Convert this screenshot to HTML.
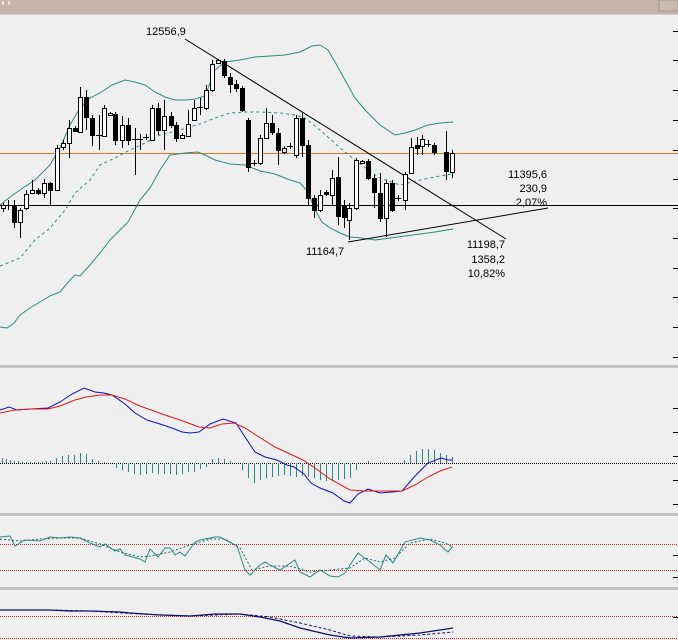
<!DOCTYPE html>
<html><head><meta charset="utf-8"><style>
html,body{margin:0;padding:0;background:#efefef;width:678px;height:640px;overflow:hidden}
svg{display:block;font-family:"Liberation Sans",sans-serif}
</style></head><body>
<svg width="678" height="640" viewBox="0 0 678 640" xmlns="http://www.w3.org/2000/svg">
<rect x="0" y="0" width="678" height="640" fill="#efefef"/>
<rect x="0" y="0" width="678" height="14" fill="#c6b4aa"/>
<rect x="0" y="14" width="678" height="1" fill="#dccfc6"/>
<rect x="659" y="0" width="19" height="11" fill="#cbbab0" stroke="#a89890" stroke-width="1"/>
<rect x="2" y="1" width="2" height="4" fill="#e8e0dc"/><rect x="8" y="1" width="2" height="4" fill="#e8e0dc"/>
<!-- separators -->
<rect x="0" y="365" width="678" height="3" fill="#c0c0c0"/>
<rect x="0" y="513" width="678" height="3" fill="#c0c0c0"/>
<rect x="0" y="587" width="678" height="3" fill="#c0c0c0"/>
<!-- ticks -->
<g stroke="#000" stroke-width="1">
<line x1="673" y1="31.5" x2="678" y2="31.5"/><line x1="673" y1="60.5" x2="678" y2="60.5"/><line x1="673" y1="90.5" x2="678" y2="90.5"/><line x1="673" y1="120.5" x2="678" y2="120.5"/><line x1="673" y1="150.5" x2="678" y2="150.5"/><line x1="673" y1="179.5" x2="678" y2="179.5"/><line x1="673" y1="208.5" x2="678" y2="208.5"/><line x1="673" y1="238.5" x2="678" y2="238.5"/><line x1="673" y1="268.5" x2="678" y2="268.5"/><line x1="673" y1="297.5" x2="678" y2="297.5"/><line x1="673" y1="327.5" x2="678" y2="327.5"/><line x1="673" y1="357.5" x2="678" y2="357.5"/>
<line x1="673" y1="408.5" x2="678" y2="408.5"/><line x1="673" y1="432.5" x2="678" y2="432.5"/><line x1="673" y1="456.5" x2="678" y2="456.5"/><line x1="673" y1="480.5" x2="678" y2="480.5"/><line x1="673" y1="504.5" x2="678" y2="504.5"/>
<line x1="673" y1="555.5" x2="678" y2="555.5"/><line x1="673" y1="577.5" x2="678" y2="577.5"/><line x1="673" y1="617.5" x2="678" y2="617.5"/>
</g>
<!-- main horizontal lines -->
<line x1="0" y1="153.5" x2="678" y2="153.5" stroke="#e07820" stroke-width="1"/>
<line x1="0" y1="205.5" x2="678" y2="205.5" stroke="#000" stroke-width="1"/>
<!-- bollinger -->
<g fill="none" stroke="#2a8a84" stroke-width="1">
<polyline points="0,205 10,197 20,190 35,180 50,165 60,148 70,125 80,108 90,98 100,93 112,85 125,80 135,82 145,85 155,92 165,97 175,100 185,100 195,99 205,96 215,70 225,62 240,60 255,57 270,56 285,55 300,52 312,46 320,45 328,50 335,62 345,80 355,98 365,110 380,125 395,135 405,133 415,130 428,125 440,123 453,122"/>
<polyline points="0,327 7,328 14,323 20,315 30,308 40,302 50,296 60,292 70,280 75,275 80,276 90,265 100,253 110,240 120,230 128,222 140,200 150,188 160,170 170,155 185,153 198,152 205,155 215,160 230,164 245,165 260,171 275,174 290,180 300,183 308,192 315,210 322,222 330,228 340,233 350,237 362,238 375,240 390,238 405,236 420,234 435,232 453,229"/>
<polyline stroke-dasharray="3,3" points="0,266 10,262 20,258 35,240 50,228 65,210 75,193 90,180 100,165 115,158 130,150 145,143 160,135 180,130 200,124 215,118 230,113 245,112 260,112 280,113 295,115 305,118 320,130 340,148 360,164 380,178 400,185 420,180 440,176 453,174"/>
</g>
<!-- trendlines -->
<line x1="185" y1="39" x2="506" y2="239" stroke="#000" stroke-width="1"/>
<line x1="348" y1="242" x2="548" y2="208" stroke="#000" stroke-width="1"/>
<!-- candles -->
<g stroke="#000" stroke-width="1" shape-rendering="crispEdges">
<g fill="#fff">
<line x1="3.5" y1="203" x2="3.5" y2="212"/><rect x="1.5" y="205.5" width="4" height="3"/>
<line x1="8.5" y1="200" x2="8.5" y2="210"/><line x1="6" y1="205.5" x2="11" y2="205.5"/>
<line x1="20.5" y1="208" x2="20.5" y2="238"/><rect x="18.5" y="210.5" width="4" height="12"/>
<line x1="26.5" y1="190" x2="26.5" y2="210"/><rect x="24.5" y="194.5" width="4" height="14"/>
<line x1="32.5" y1="180" x2="32.5" y2="194"/><rect x="30.5" y="190.5" width="4" height="3"/>
<line x1="44.5" y1="179" x2="44.5" y2="198"/><rect x="42.5" y="183.5" width="4" height="10"/>
<line x1="57.5" y1="145" x2="57.5" y2="191"/><rect x="55.5" y="148.5" width="4" height="42"/>
<line x1="63.5" y1="140" x2="63.5" y2="150"/><rect x="61.5" y="143.5" width="4" height="4"/>
<line x1="69.5" y1="120" x2="69.5" y2="158"/><rect x="67.5" y="128.5" width="4" height="15"/>
<line x1="80.5" y1="87" x2="80.5" y2="133"/><rect x="78.5" y="97.5" width="4" height="35"/>
<line x1="104.5" y1="105" x2="104.5" y2="137"/><rect x="102.5" y="108.5" width="4" height="28"/>
<line x1="110.5" y1="112" x2="110.5" y2="116"/><rect x="108.5" y="113.5" width="4" height="2"/>
<line x1="122.5" y1="116" x2="122.5" y2="148"/><rect x="120.5" y="125.5" width="4" height="15"/>
<line x1="152.5" y1="105" x2="152.5" y2="141"/><rect x="150.5" y="108.5" width="4" height="32"/>
<line x1="164.5" y1="100" x2="164.5" y2="150"/><rect x="162.5" y="116.5" width="4" height="14"/>
<line x1="182.5" y1="133" x2="182.5" y2="139"/><rect x="180.5" y="135.5" width="4" height="3"/>
<line x1="188.5" y1="110" x2="188.5" y2="137"/><rect x="186.5" y="124.5" width="4" height="12"/>
<line x1="194.5" y1="100" x2="194.5" y2="121"/><rect x="192.5" y="108.5" width="4" height="12"/>
<line x1="206.5" y1="85" x2="206.5" y2="110"/><rect x="204.5" y="90.5" width="4" height="18"/>
<line x1="212.5" y1="60" x2="212.5" y2="92"/><rect x="210.5" y="64.5" width="4" height="26"/>
<line x1="218.5" y1="59" x2="218.5" y2="64"/><rect x="216.5" y="60.5" width="4" height="3"/>
<line x1="260.5" y1="135" x2="260.5" y2="165"/><rect x="258.5" y="138.5" width="4" height="25"/>
<line x1="266.5" y1="108" x2="266.5" y2="139"/><rect x="264.5" y="123.5" width="4" height="15"/>
<line x1="284.5" y1="146" x2="284.5" y2="154"/><rect x="282.5" y="148.5" width="4" height="4"/>
<line x1="296.5" y1="115" x2="296.5" y2="158"/><rect x="294.5" y="118.5" width="4" height="37"/>
<line x1="320.5" y1="190" x2="320.5" y2="212"/><rect x="318.5" y="195.5" width="4" height="15"/>
<line x1="332.5" y1="170" x2="332.5" y2="205"/><rect x="330.5" y="178.5" width="4" height="17"/>
<line x1="349.5" y1="203" x2="349.5" y2="240"/><rect x="347.5" y="208.5" width="4" height="12"/>
<line x1="356.5" y1="158" x2="356.5" y2="210"/><rect x="354.5" y="160.5" width="4" height="48"/>
<line x1="362.5" y1="160" x2="362.5" y2="164"/><rect x="360.5" y="161.5" width="4" height="2"/>
<line x1="386.5" y1="180" x2="386.5" y2="237"/><rect x="384.5" y="183.5" width="4" height="35"/>
<line x1="405.5" y1="172" x2="405.5" y2="210"/><rect x="403.5" y="174.5" width="4" height="26"/>
<line x1="411.5" y1="138" x2="411.5" y2="174"/><rect x="409.5" y="147.5" width="4" height="26"/>
<line x1="422.5" y1="135" x2="422.5" y2="155"/><rect x="420.5" y="139.5" width="4" height="7"/>
<line x1="452.5" y1="150" x2="452.5" y2="178"/><rect x="450.5" y="153.5" width="4" height="19"/>
</g>
<g fill="#000">
<line x1="14.5" y1="200" x2="14.5" y2="228"/><rect x="12.5" y="206.5" width="4" height="16"/>
<line x1="38.5" y1="188" x2="38.5" y2="195"/><rect x="36.5" y="190.5" width="4" height="3"/>
<line x1="50.5" y1="182" x2="50.5" y2="205"/><rect x="48.5" y="183.5" width="4" height="7"/>
<line x1="75.5" y1="126" x2="75.5" y2="132"/><rect x="73.5" y="128.5" width="4" height="3"/>
<line x1="86.5" y1="90" x2="86.5" y2="130"/><rect x="84.5" y="97.5" width="4" height="20"/>
<line x1="92.5" y1="115" x2="92.5" y2="146"/><rect x="90.5" y="118.5" width="4" height="17"/>
<line x1="99.5" y1="115" x2="99.5" y2="150"/><line x1="96" y1="135.5" x2="102" y2="135.5"/>
<line x1="115.5" y1="112" x2="115.5" y2="145"/><rect x="113.5" y="114.5" width="4" height="26"/>
<line x1="128.5" y1="118" x2="128.5" y2="145"/><rect x="126.5" y="125.5" width="4" height="15"/>
<line x1="135.5" y1="128" x2="135.5" y2="175"/><line x1="132" y1="139.5" x2="138" y2="139.5"/>
<line x1="140.5" y1="134" x2="140.5" y2="150"/><line x1="137" y1="139.5" x2="143" y2="139.5"/>
<line x1="146.5" y1="134" x2="146.5" y2="140"/><line x1="143" y1="137.5" x2="149" y2="137.5"/>
<line x1="158.5" y1="103" x2="158.5" y2="135"/><rect x="156.5" y="108.5" width="4" height="22"/>
<line x1="171.5" y1="112" x2="171.5" y2="128"/><rect x="169.5" y="116.5" width="4" height="9"/>
<line x1="176.5" y1="122" x2="176.5" y2="142"/><rect x="174.5" y="125.5" width="4" height="13"/>
<line x1="200.5" y1="98" x2="200.5" y2="115"/><line x1="197" y1="107.5" x2="203" y2="107.5"/>
<line x1="224.5" y1="59" x2="224.5" y2="78"/><rect x="222.5" y="61.5" width="4" height="14"/>
<line x1="230.5" y1="73" x2="230.5" y2="93"/><rect x="228.5" y="77.5" width="4" height="7"/>
<line x1="236.5" y1="80" x2="236.5" y2="92"/><rect x="234.5" y="84.5" width="4" height="4"/>
<line x1="242.5" y1="86" x2="242.5" y2="112"/><rect x="240.5" y="88.5" width="4" height="22"/>
<line x1="248.5" y1="118" x2="248.5" y2="172"/><rect x="246.5" y="120.5" width="4" height="47"/>
<line x1="254.5" y1="160" x2="254.5" y2="166"/><line x1="251" y1="163.5" x2="257" y2="163.5"/>
<line x1="272.5" y1="115" x2="272.5" y2="135"/><rect x="270.5" y="123.5" width="4" height="9"/>
<line x1="278.5" y1="128" x2="278.5" y2="165"/><rect x="276.5" y="133.5" width="4" height="17"/>
<line x1="290.5" y1="143" x2="290.5" y2="149"/><line x1="287" y1="146.5" x2="293" y2="146.5"/>
<line x1="302.5" y1="112" x2="302.5" y2="157"/><rect x="300.5" y="118.5" width="4" height="27"/>
<line x1="308.5" y1="140" x2="308.5" y2="205"/><rect x="306.5" y="145.5" width="4" height="53"/>
<line x1="314.5" y1="195" x2="314.5" y2="218"/><rect x="312.5" y="198.5" width="4" height="12"/>
<line x1="326.5" y1="190" x2="326.5" y2="196"/><rect x="324.5" y="192.5" width="4" height="2"/>
<line x1="338.5" y1="157" x2="338.5" y2="225"/><rect x="336.5" y="177.5" width="4" height="39"/>
<line x1="344.5" y1="200" x2="344.5" y2="228"/><rect x="342.5" y="205.5" width="4" height="12"/>
<line x1="368.5" y1="159" x2="368.5" y2="180"/><rect x="366.5" y="161.5" width="4" height="17"/>
<line x1="374.5" y1="175" x2="374.5" y2="208"/><rect x="372.5" y="178.5" width="4" height="14"/>
<line x1="380.5" y1="173" x2="380.5" y2="222"/><rect x="378.5" y="193.5" width="4" height="25"/>
<line x1="392.5" y1="180" x2="392.5" y2="212"/><rect x="390.5" y="183.5" width="4" height="27"/>
<line x1="398.5" y1="195" x2="398.5" y2="201"/><line x1="395" y1="198.5" x2="401" y2="198.5"/>
<line x1="417.5" y1="137" x2="417.5" y2="155"/><rect x="415.5" y="145.5" width="4" height="3"/>
<line x1="428.5" y1="140" x2="428.5" y2="147"/><line x1="425" y1="144.5" x2="431" y2="144.5"/>
<line x1="434.5" y1="143" x2="434.5" y2="155"/><rect x="432.5" y="145.5" width="4" height="7"/>
<line x1="446.5" y1="131" x2="446.5" y2="180"/><rect x="444.5" y="152.5" width="4" height="19"/>
</g>
</g>
<!-- labels -->
<g font-size="11" fill="#000">
<text x="146" y="35">12556,9</text>
<text x="306" y="255">11164,7</text>
<text x="505" y="248" text-anchor="end">11198,7</text>
<text x="505" y="263" text-anchor="end">1358,2</text>
<text x="505" y="277" text-anchor="end">10,82%</text>
<text x="547" y="178" text-anchor="end">11395,6</text>
<text x="547" y="192" text-anchor="end">230,9</text>
<text x="547" y="206" text-anchor="end">2,07%</text>
</g>
<!-- MACD -->
<line x1="0" y1="463.5" x2="678" y2="463.5" stroke="#000" stroke-width="1" stroke-dasharray="1,1"/>
<g stroke="#2a8a84" stroke-width="1">
<path d="M2.5 463V458M6.5 463V459M10.5 463V460M14.5 463V461M18.5 463V461M22.5 463V462M26.5 463V462M30.5 463V462M34.5 463V462M38.5 463V462M42.5 463V462M46.5 463V461M50.5 463V461M56.5 463V458M62.5 463V456M68.5 463V455M74.5 463V455M80.5 463V453M86.5 463V454M92.5 463V459M98.5 463V461M104.5 463V462
M116.5 463V468M122.5 463V470M128.5 463V472M134.5 463V474M140.5 463V475M146.5 463V474M152.5 463V473M158.5 463V474M164.5 463V474M170.5 463V474M176.5 463V475M182.5 463V474M188.5 463V472M194.5 463V472M200.5 463V469M206.5 463V467
M212.5 463V459M218.5 463V458M224.5 463V459M230.5 463V461
M242.5 463V470M248.5 463V478M254.5 463V483M260.5 463V480M266.5 463V478M272.5 463V477M278.5 463V476M284.5 463V475M290.5 463V476M296.5 463V477M302.5 463V476M308.5 463V477M314.5 463V478M320.5 463V480M326.5 463V481M332.5 463V481M338.5 463V480M344.5 463V479M350.5 463V478M356.5 463V470
M368.5 463V461M380.5 463V462
M404.5 463V460M410.5 463V455M416.5 463V451M422.5 463V449M428.5 463V449M434.5 463V450M440.5 463V453M446.5 463V455M452.5 463V457"/>
</g>
<polyline fill="none" stroke="#1010c8" stroke-width="1" points="0,410 9,407 17,410 30,409 48,408 60,402 72,394 84,388 95,392 104,393 112,395 125,404 135,413 147,420 160,424 172,428 182,432 190,433 199,432 210,424 223,419 236,423 245,437 255,452 265,457 277,460 287,465 294,467 304,474 311,483 320,488 333,493 344,501 350,503 358,494 368,489 380,493 392,492 402,491 415,476 428,463 441,458 448,460 452,460"/>
<polyline fill="none" stroke="#e01818" stroke-width="1" points="0,413 15,410 30,409 48,409 60,406 75,400 86,397 100,395 112,395 125,399 140,406 151,410 165,415 180,420 199,427 210,428 222,424 234,423 245,428 259,437 275,447 290,454 303,460 315,468 330,479 350,490 365,491 380,491 402,491 415,485 428,477 440,471 452,467"/>
<!-- RSI -->
<line x1="0" y1="544.5" x2="678" y2="544.5" stroke="#e02020" stroke-width="1" stroke-dasharray="1,1"/>
<line x1="0" y1="570.5" x2="678" y2="570.5" stroke="#e02020" stroke-width="1" stroke-dasharray="1,1"/>
<polyline fill="none" stroke="#2a8a84" stroke-width="1" points="0,537 10,536 15,546 25,540 40,541 50,537 60,538 70,537 80,538 90,543 95,545 100,547 105,544 115,551 120,549 125,555 140,559 145,562 150,549 158,557 165,548 170,548 175,555 180,552 185,556 195,542 200,540 215,537 220,537 237,546 245,570 250,575 260,565 265,562 270,565 280,570 295,560 300,572 310,577 320,570 330,576 338,577 345,573 352,562 358,553 370,562 380,570 386,555 393,563 405,542 420,538 430,540 440,545 448,552 453,546"/>
<polyline fill="none" stroke="#1a6a66" stroke-width="1" stroke-dasharray="2,2" points="0,539 20,541 40,539 60,538 80,538 100,544 120,552 140,557 150,556 170,552 190,545 210,539 225,539 240,548 252,570 270,566 290,566 310,572 330,570 350,568 365,558 380,562 395,558 410,543 430,539 445,543 453,547"/>
<!-- bottom -->
<line x1="0" y1="616.5" x2="678" y2="616.5" stroke="#e02020" stroke-width="1" stroke-dasharray="1,1"/>
<line x1="0" y1="638.5" x2="678" y2="638.5" stroke="#e02020" stroke-width="1" stroke-dasharray="1,1"/>
<polyline fill="none" stroke="#101070" stroke-width="1.3" points="0,610 25,610 50,610 70,611 90,611 120,612 130,613 160,615 190,616 215,614 240,614 260,617 280,621 300,628 330,635 350,638 380,637 400,635 420,633 440,630 453,628"/>
<polyline fill="none" stroke="#101070" stroke-width="1" stroke-dasharray="3,2" points="0,610 50,610 90,611 140,614 190,616 240,614 270,617 300,623 330,630 350,636 380,637 420,635 453,632"/>
</svg>
</body></html>
